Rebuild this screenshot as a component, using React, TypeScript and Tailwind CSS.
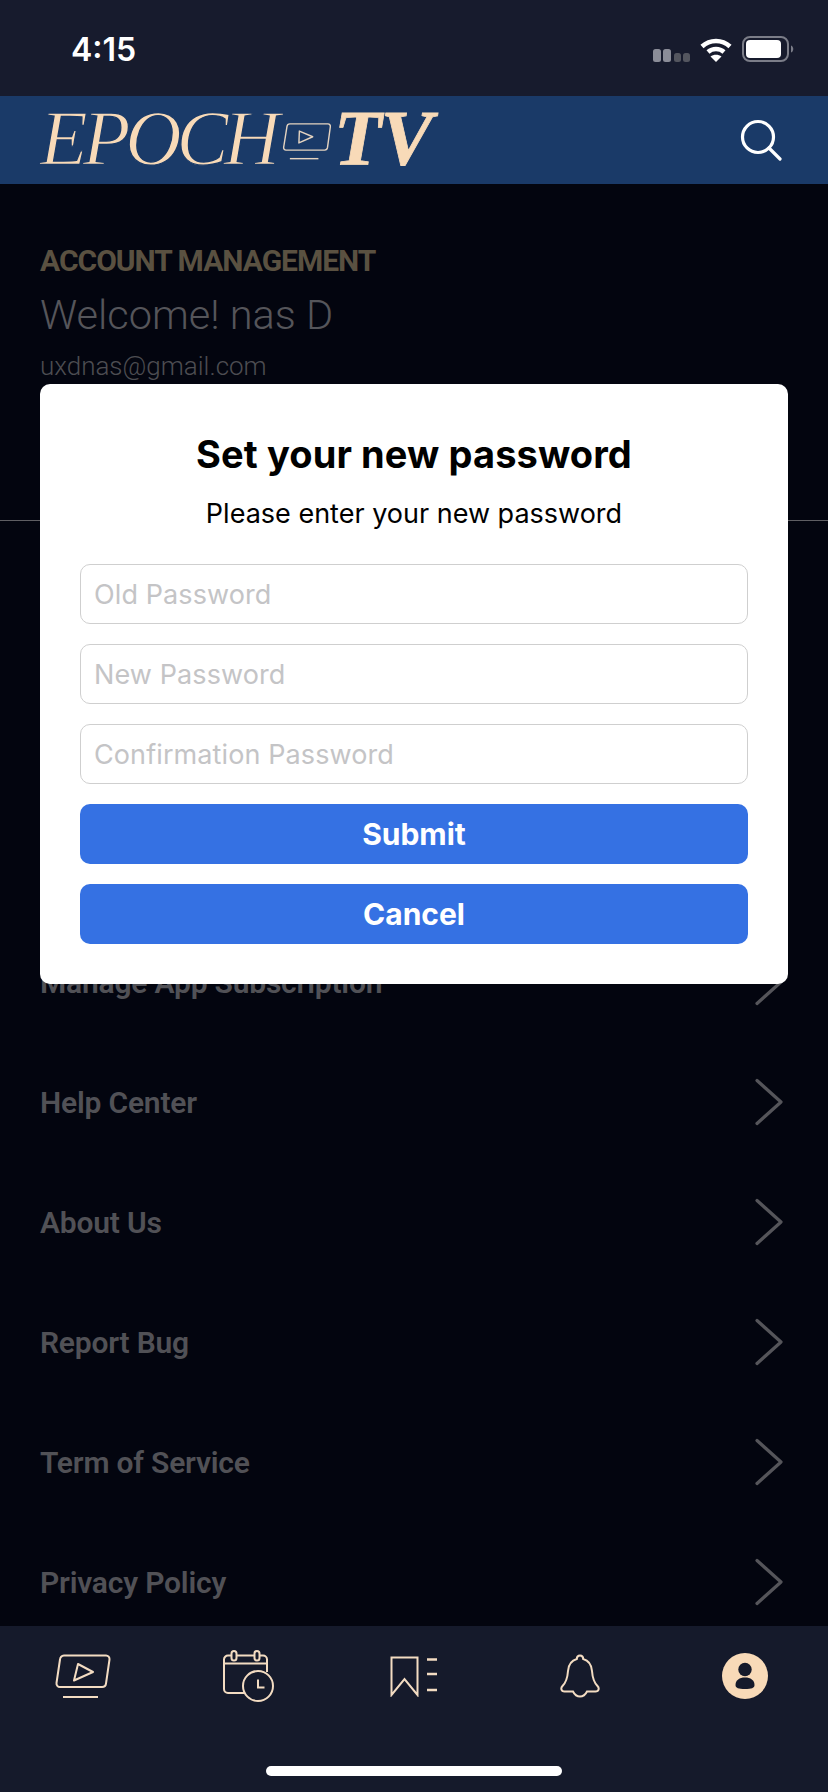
const Logo = () => (
  <div className="mb-[4px] flex items-center font-['Liberation_Serif',serif] text-[78px] leading-none italic text-[#f8dab8]">
    <span className="tracking-[-5px] [-webkit-text-stroke:1.3px_#1a3a68]">EPOCH</span>
    <svg width="50" height="40" viewBox="0 0 52 42" fill="none" stroke="#e4d3c0" strokeWidth="1.5" className="mt-[7px] mr-[2px] ml-[7px] shrink-0">
      <path d="M8 2h40a2.500 2.500 0 0 1 2.500 3l-3 22a3 3 0 0 1-3 2.500H4a2.500 2.500 0 0 1-2.500-3l3.500-22A3 3 0 0 1 8 2Z" />
      <path d="M18 9.500l14 6-14.500 6.500Z" strokeLinejoin="round" />
      <path d="M8 38.500h30" />
    </svg>
    <span className="font-bold tracking-[-1px] [-webkit-text-stroke:0.8px_#f8dab8]">TV</span>
  </div>
);

const Chevron = () => (
  <svg width="30" height="48" viewBox="0 0 30 48" fill="none" stroke="#55555a" strokeWidth="3.200" strokeLinecap="round" strokeLinejoin="round">
    <path d="M3 2.500L27 24 3 45.500" />
  </svg>
);

const MenuRow = ({ label }: { label: string }) => (
  <div className="flex h-[120px] shrink-0 items-center justify-between pr-[44px] text-[30px] font-semibold tracking-[-0.2px] text-[#515156]">
    <span>{label}</span>
    <Chevron />
  </div>
);

const Field = ({ placeholder }: { placeholder: string }) => (
  <input
    placeholder={placeholder}
    className="h-[60px] w-full rounded-[10px] border border-[#cfcfcf] px-[13px] text-[27px] tracking-[0.1px] outline-none placeholder:text-[#c4c4c6]"
  />
);

const navColor = '#f3dcc2';

export default function App() {
  return (
    <div className="relative flex h-[1792px] w-[828px] flex-col overflow-hidden bg-[#03050f] font-['Roboto',sans-serif]">
      <div className="flex h-[96px] shrink-0 items-center justify-between bg-[#171b2d] pt-[2px] pr-[34px] pl-[71px]">
        <span className="mt-[2px] font-['Inter',sans-serif] text-[32px] font-semibold text-white">4:15</span>
        <div className="flex items-end gap-[9px]">
          <svg width="38" height="14" viewBox="0 0 38 14" fill="#8b8d98">
            <rect x="0" y="1" width="8" height="13" rx="2.500" />
            <rect x="10" y="1" width="8" height="13" rx="2.500" />
            <rect x="21" y="5" width="7" height="9" rx="2.500" fill="#54565f" />
            <rect x="30" y="5" width="7" height="9" rx="2.500" fill="#54565f" />
          </svg>
          <svg width="32" height="24" viewBox="0 0 32 24" fill="none" stroke="#fff" strokeWidth="4.500">
            <path d="M2 8.500c8-7.500 20-7.500 28 0" />
            <path d="M8 14c4.500-4 11.500-4 16 0" />
            <path d="M16 24l-5.500-5.500c3-2.500 8-2.500 11 0Z" fill="#fff" stroke="none" />
          </svg>
          <svg width="52" height="26" viewBox="0 0 52 26" fill="none" className="ml-px">
            <rect x="1" y="1" width="45" height="24" rx="7" stroke="#7b7d88" strokeWidth="2" />
            <rect x="4" y="4" width="35" height="18" rx="4" fill="#fff" />
            <path d="M49 9.500c3 1 3 6 0 7Z" fill="#7b7d88" />
          </svg>
        </div>
      </div>

      <header className="flex h-[88px] shrink-0 items-center justify-between bg-[#1a3a68] pr-[46px] pl-[40px]">
        <Logo />
        <svg width="42" height="42" viewBox="0 0 42 42" fill="none" stroke="#fff" strokeWidth="3.200" strokeLinecap="round">
          <circle cx="18" cy="18" r="15.500" />
          <path d="M29 29l11 11" />
        </svg>
      </header>

      <main className="flex min-h-0 flex-1 flex-col overflow-hidden">
        <div className="px-[40px] pt-[57px] pb-[137px]">
          <h1 className="text-[30px] leading-[40px] font-bold tracking-[-1px] text-[#5a5141]">ACCOUNT MANAGEMENT</h1>
          <p className="mt-[9px] text-[41.500px] leading-[50px] font-light text-[#55555a]">Welcome! nas D</p>
          <p className="mt-[9px] text-[26px] leading-[34px] font-light text-[#4d4d52]">uxdnas@gmail.com</p>
        </div>
        <div className="h-px shrink-0 bg-[#5f5f63]" />
        <div className="flex flex-col pt-[401px] pl-[40px]">
          <MenuRow label="Manage App Subscription" />
          <MenuRow label="Help Center" />
          <MenuRow label="About Us" />
          <MenuRow label="Report Bug" />
          <MenuRow label="Term of Service" />
          <MenuRow label="Privacy Policy" />
        </div>
      </main>

      <nav className="grid h-[166px] shrink-0 grid-cols-5 grid-rows-[100px] items-center justify-items-center bg-[#151a2b]">
        <svg width="56" height="44" viewBox="0 0 56 44" fill="none" stroke={navColor} strokeWidth="2">
          <path d="M9 1.500h42a3.500 3.500 0 0 1 3.500 4l-3.500 24a4 4 0 0 1-4 3.500H5a3.500 3.500 0 0 1-3.500-4L5 5.500a4.500 4.500 0 0 1 4-4Z" />
          <path d="M23 10l15 8-19 8.500Z" strokeLinejoin="round" />
          <path d="M8 43h35" />
        </svg>
        <svg width="51" height="52" viewBox="0 0 51 52" fill="none" stroke={navColor} strokeWidth="2">
          <path d="M22 43H5a4 4 0 0 1-4-4V9.500a4 4 0 0 1 4-4h35a4 4 0 0 1 4 4V22" />
          <path d="M1 13.500h43" />
          <rect x="8.500" y="1" width="5" height="9.500" rx="2.500" fill="#151a2b" />
          <rect x="31.500" y="1" width="5" height="9.500" rx="2.500" fill="#151a2b" />
          <circle cx="35" cy="36" r="15" fill="#151a2b" />
          <path d="M35 29.500v8h6.500" />
        </svg>
        <svg width="47" height="41" viewBox="0 0 47 41" fill="none" stroke={navColor} strokeWidth="2">
          <path d="M1.500 39V1.500h26V39L14.500 23Z" />
          <path d="M37 3.500h10M37 18h10M37 34h10" strokeWidth="2.500" />
        </svg>
        <svg width="40" height="44" viewBox="0 0 40 44" fill="none" stroke={navColor} strokeWidth="2">
          <path d="M20 1.500c2 0 3.200 1.300 3.200 3.500 5.500 1.500 8.300 6 8.800 12 .5 7 1.500 11 5.500 15 2 2 1.500 5.500-2 5.500H27c-1.500 3-4 5-7 5s-5.500-2-7-5H4.500c-3.500 0-4-3.500-2-5.500 4-4 5-8 5.500-15 .5-6 3.300-10.500 8.800-12 0-2.200 1.200-3.500 3.200-3.500Z" />
        </svg>
        <svg width="46" height="46" viewBox="0 0 46 46">
          <circle cx="23" cy="23" r="23" fill="#f8dab8" />
          <circle cx="23" cy="16.500" r="6.700" fill="#151a2b" />
          <path d="M13.500 32c0-5 4-7.500 9.500-7.500S32.500 27 32.500 32c0 3-3 4-9.500 4s-9.500-1-9.500-4Z" fill="#151a2b" />
        </svg>
      </nav>

      {/* home indicator */}
      <div className="absolute bottom-[16px] left-[266px] h-[10px] w-[296px] rounded-full bg-white" />

      {/* password dialog */}
      <div className="absolute top-[384px] left-[40px] flex w-[748px] flex-col rounded-[10px] bg-white px-[40px] pt-[48px] pb-[40px] font-['Inter',sans-serif]">
        <h2 className="text-center text-[38px] leading-[44px] font-bold tracking-[0.1px] text-black">Set your new password</h2>
        <p className="mt-[20px] text-center text-[27px] leading-[36px] text-black">Please enter your new password</p>
        <div className="mt-[32px] flex flex-col gap-[20px]">
          <Field placeholder="Old Password" />
          <Field placeholder="New Password" />
          <Field placeholder="Confirmation Password" />
          <button type="button" className="h-[60px] rounded-[10px] bg-[#3571e3] text-[30px] font-bold text-white">Submit</button>
          <button type="button" className="h-[60px] rounded-[10px] bg-[#3571e3] text-[30px] font-bold text-white">Cancel</button>
        </div>
      </div>
    </div>
  );
}
